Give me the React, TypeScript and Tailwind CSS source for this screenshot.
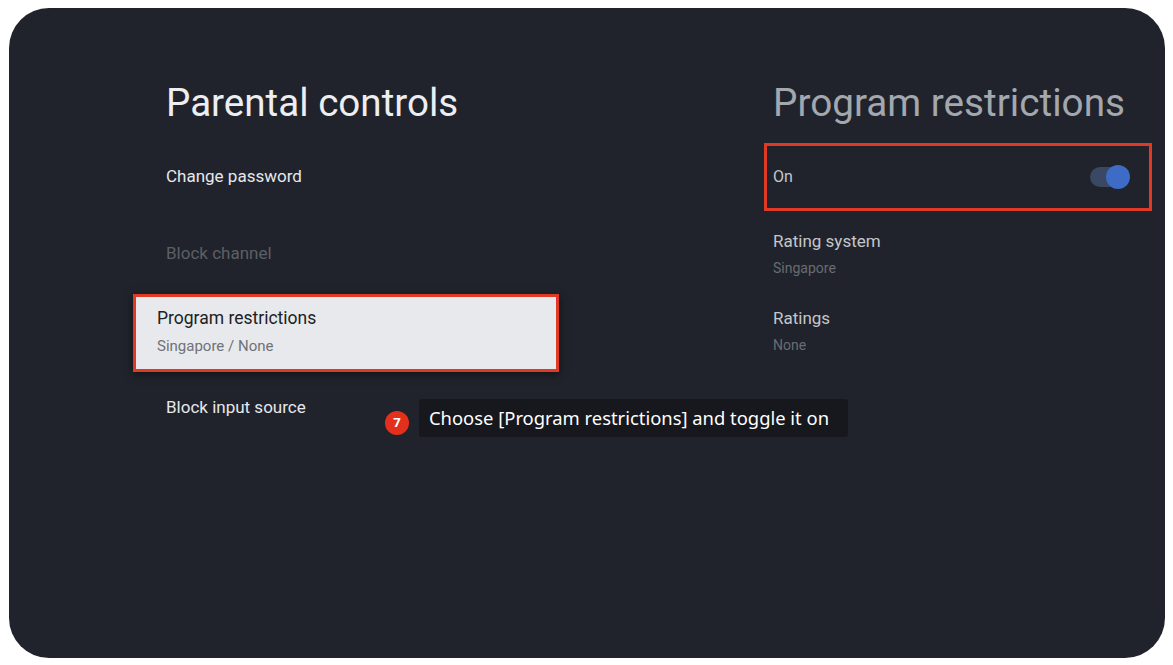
export default function App() {
  return (
    <div className="h-[665px] w-full bg-white pt-[8px] pl-[9px]" style={{ fontFamily: "Roboto, 'Noto Sans', sans-serif" }}>
      <div className="relative flex h-[650px] w-[1156px] rounded-[40px] bg-[#20232b]">
        <section className="ml-[157px] w-[400px] pt-[72px]">
          <h1 className="h-[58px] text-[38.6px] leading-[46px] text-[#eceef1]">Parental controls</h1>
          <div className="flex h-[77px] items-center text-[17px] text-[#e6e8eb]">Change password</div>
          <div className="flex h-[77px] items-center text-[17px] text-[#5c5f66]">Block channel</div>
          <div className="-ml-[33px] mt-[2px] flex h-[78px] w-[426px] flex-col justify-center border-[3px] border-[#e03a26] bg-[#e8e9ec] pl-[21px] shadow-[0_2px_8px_rgba(0,0,0,0.5)]">
            <span className="-mt-[4px] text-[17.5px] leading-[22px] text-[#202124]">Program restrictions</span>
            <span className="mt-[8px] text-[15px] leading-[18px] text-[#6f7277]">Singapore / None</span>
          </div>
          <div className="flex h-[72px] items-center text-[17px] text-[#e6e8eb]">Block input source</div>
        </section>

        <section className="ml-[198px] w-[388px] pt-[72px]">
          <h2 className="h-[63px] pl-[9px] text-[38.7px] leading-[46px] text-[#a3a7ae]">Program restrictions</h2>
          <div className="flex h-[68px] items-center justify-between border-[3px] border-[#e03a26] pr-[19px] pl-[6px]">
            <span className="text-[16px] text-[#c4c7cc]">On</span>
            <span className="relative flex h-[24px] w-[40px] items-center">
              <span className="h-[20px] w-[36px] rounded-full bg-[#3b4863]" />
              <span className="absolute right-0 h-[24px] w-[24px] rounded-full bg-[#3d6bc6]" />
            </span>
          </div>
          <div className="mt-[3px] flex h-[77px] flex-col justify-center pl-[9px]">
            <span className="text-[17px] leading-[22px] text-[#c4c7cc]">Rating system</span>
            <span className="mt-[8px] text-[14px] leading-[16px] text-[#696c73]">Singapore</span>
          </div>
          <div className="flex h-[77px] flex-col justify-center pl-[9px]">
            <span className="text-[17px] leading-[22px] text-[#c4c7cc]">Ratings</span>
            <span className="mt-[8px] text-[14px] leading-[16px] text-[#696c73]">None</span>
          </div>
        </section>

        <div className="absolute top-[391px] left-[376px] flex items-start gap-[10px]">
          <span className="mt-[12px] flex h-[24px] w-[24px] items-center justify-center rounded-full bg-[#e3301c] text-[13px] font-bold text-white" style={{ fontFamily: "'Noto Sans', sans-serif" }}>7</span>
          <span className="flex h-[38px] items-center rounded-[3px] bg-[#16181d] pr-[19px] pl-[10px] text-[18.4px] text-white" style={{ fontFamily: "'Noto Sans', sans-serif" }}>
            Choose [Program restrictions] and toggle it on
          </span>
        </div>
      </div>
    </div>
  );
}
